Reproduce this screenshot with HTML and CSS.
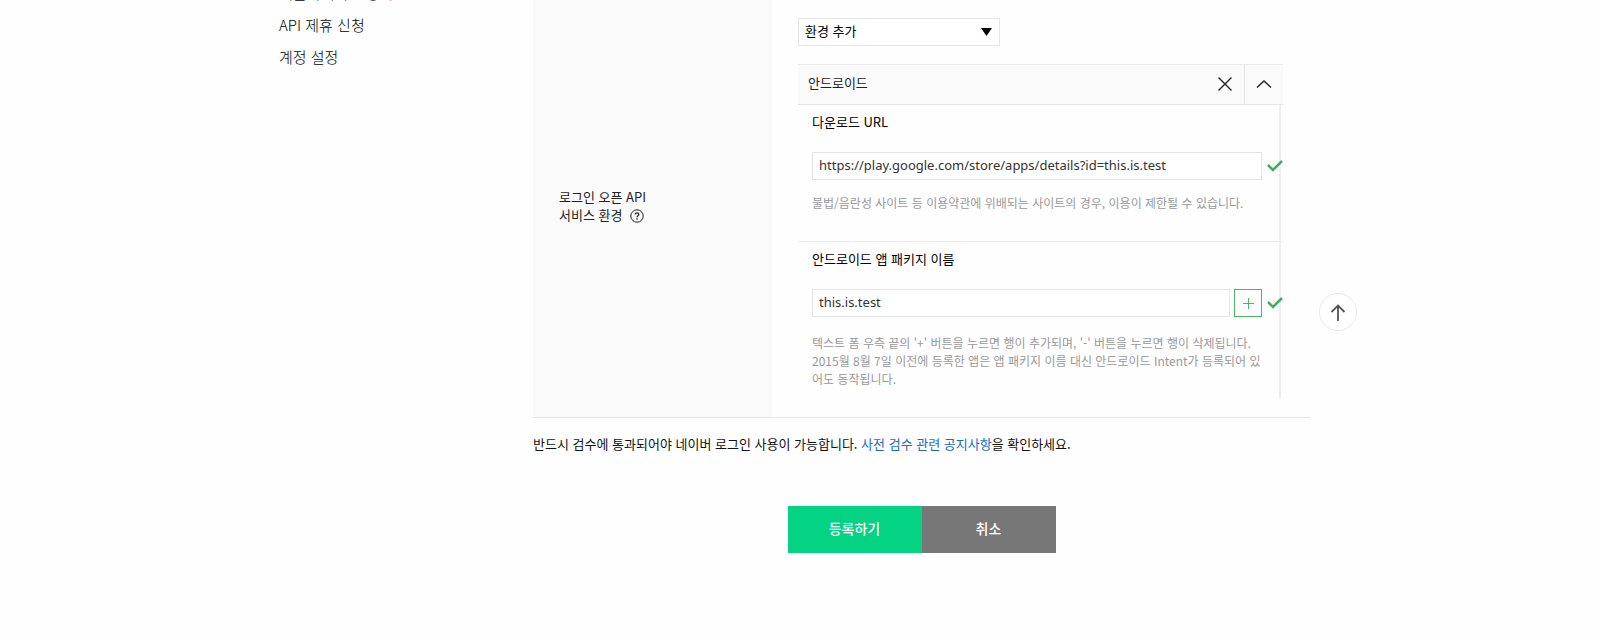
FILE: index.html
```html
<!DOCTYPE html>
<html lang="ko">
<head>
  <meta charset="UTF-8">
  <title>애플리케이션 등록</title>
  <link rel="stylesheet" href="styles.css">
</head>
<body>

<div class="container">
  <!-- 왼쪽 메뉴 -->
  <nav class="side-menu">
    <ul>
      <li><a href="#">애플리케이션 등록</a></li>
      <li><a href="#">API 제휴 신청</a></li>
      <li><a href="#">계정 설정</a></li>
    </ul>
  </nav>

  <main class="content">
    <form>
      <div class="form-row">
        <div class="form-title">
          <p>로그인 오픈 API<br>서비스 환경
            <button type="button" class="help" aria-label="도움말">
              <svg width="14" height="14" viewBox="0 0 14 14" fill="none" stroke="#222">
                <circle cx="7" cy="7" r="6.2"/>
                <path d="M5.2 5.6c0-2.4 3.6-2.3 3.6 0C8.8 6.8 7 6.9 7 8.3M7 9.3v1.4" stroke-width="1.3"/>
              </svg>
            </button>
          </p>
        </div>

        <div class="form-body">
          <div class="select-box">
            <select aria-label="환경 추가">
              <option>환경 추가</option>
            </select>
            <svg class="arrow" width="11" height="8" viewBox="0 0 11 8"><path d="M0 0h11L5.5 8z"/></svg>
          </div>

          <!-- 안드로이드 환경 -->
          <section class="panel">
            <header class="panel-head">
              <h3>안드로이드</h3>
              <button type="button" class="close" aria-label="삭제">
                <svg width="14" height="14" viewBox="0 0 14 14"><path d="M.5.5l13 13M13.5.5l-13 13"/></svg>
              </button>
              <button type="button" class="fold" aria-label="접기">
                <svg width="16" height="10" viewBox="0 0 16 10"><path d="M1 8.5l7-6.5 7 6.5"/></svg>
              </button>
            </header>

            <div class="panel-body">
              <div class="field">
                <label for="downloadUrl">다운로드 URL</label>
                <div class="input-row">
                  <input type="text" id="downloadUrl" value="https://play.google.com/store/apps/details?id=this.is.test">
                  <svg class="check" width="16" height="12" viewBox="0 0 16 12"><path d="M1 5l5 5 9-9"/></svg>
                </div>
                <p class="hint">불법/음란성 사이트 등 이용약관에 위배되는 사이트의 경우, 이용이 제한될 수 있습니다.</p>
              </div>

              <div class="field">
                <label for="packageName">안드로이드 앱 패키지 이름</label>
                <div class="input-row">
                  <input type="text" id="packageName" value="this.is.test">
                  <button type="button" class="add" aria-label="추가">
                    <svg width="11" height="11" viewBox="0 0 11 11"><path d="M5.5 0v11M0 5.5h11"/></svg>
                  </button>
                  <svg class="check" width="16" height="12" viewBox="0 0 16 12"><path d="M1 5l5 5 9-9"/></svg>
                </div>
                <p class="hint">텍스트 폼 우측 끝의 '+' 버튼을 누르면 행이 추가되며, '-' 버튼을 누르면 행이 삭제됩니다.<br>2015월 8월 7일 이전에 등록한 앱은 앱 패키지 이름 대신 안드로이드 Intent가 등록되어 있어도 동작됩니다.</p>
              </div>
            </div>
          </section>
        </div>
      </div>

      <p class="notice">반드시 검수에 통과되어야 네이버 로그인 사용이 가능합니다. <a href="#">사전 검수 관련 공지사항</a>을 확인하세요.</p>

      <div class="buttons">
        <button type="submit" class="submit">등록하기</button>
        <button type="button" class="cancel">취소</button>
      </div>
    </form>
  </main>
</div>

<!-- 맨 위로 -->
<a href="#" class="to-top" aria-label="맨 위로">
  <svg width="16" height="17" viewBox="0 0 16 17"><path d="M8 17V2M1.5 8L8 1.5 14.5 8"/></svg>
</a>

</body>
</html>
```
FILE: styles.css
```css
* {
  margin: 0;
  padding: 0;
  box-sizing: border-box;
}

body {
  font-family: "Noto Sans CJK KR", sans-serif;
  font-size: 13px;
  line-height: 18px;
  color: #222;
  background: #fefefe;
  overflow-x: hidden;
}

button {
  font-family: inherit;
  border: none;
  background: none;
  cursor: pointer;
}

svg {
  display: block;
}

.container {
  display: flex;
  max-width: 1042px;
  margin: 0 auto;
  padding-right: 11px;
}

/* 왼쪽 메뉴 */
.side-menu {
  width: 254px;
  flex-shrink: 0;
  margin-top: -23px;
}

.side-menu ul {
  list-style: none;
}

.side-menu a {
  display: block;
  font-size: 15px;
  font-weight: 300;
  line-height: 32px;
  color: #000;
  text-decoration: none;
}

.content {
  flex: 1;
}

/* 등록 폼 */
.form-row {
  display: flex;
  border-bottom: 1px solid #e5e5e5;
}

.form-title {
  width: 239px;
  padding: 0 26px 6px;
  background: #fafafa;
  display: flex;
  align-items: center;
}

.help {
  display: inline-block;
  vertical-align: middle;
  margin-left: 4px;
}

.form-body {
  flex: 1;
  padding: 18px 27px 18px 26px;
}

.select-box {
  position: relative;
  width: 202px;
  height: 28px;
  margin-bottom: 18px;
}

.select-box select {
  appearance: none;
  width: 100%;
  height: 100%;
  padding: 0 6px 3px;
  border: 1px solid #e5e5e5;
  background: #fff;
  font-family: inherit;
  font-size: 13px;
  color: #000;
}

.select-box .arrow {
  position: absolute;
  right: 8px;
  top: 10px;
}

.panel-head {
  display: flex;
  height: 41px;
  border-top: 1px solid #ececec;
  border-bottom: 1px solid #e5e5e5;
  background: #fafafa;
}

.panel-head h3 {
  flex: 1;
  padding-left: 10px;
  font-size: 13px;
  font-weight: 400;
  line-height: 36px;
}

.panel-head button {
  display: flex;
  align-items: center;
  justify-content: center;
  width: 39px;
  padding-bottom: 2px;
}

.panel-head .fold {
  border-left: 1px solid #e5e5e5;
}

.panel-head path {
  fill: none;
  stroke: #222;
  stroke-width: 1.4;
}

.panel-body {
  background: linear-gradient(#efefef, #efefef) right 2px top / 2px 100% no-repeat;
}

.field {
  height: 136px;
  padding: 8px 0 0 14px;
}

.field + .field {
  height: 158px;
  border-top: 1px solid #ececec;
}

.field label {
  display: block;
  margin-bottom: 21px;
  color: #000;
}

.input-row {
  display: flex;
  align-items: center;
}

.input-row input {
  flex: 1;
  min-width: 0;
  height: 28px;
  padding: 0 6px 2px;
  border: 1px solid #e5e5e5;
  background: #fff;
  font-family: "Noto Sans", "Noto Sans CJK KR", sans-serif;
  font-size: 13px;
  color: #333;
}

.check {
  margin-left: 5px;
  fill: none;
  stroke: #3cb05f;
  stroke-width: 2.5;
}

.add {
  display: flex;
  align-items: center;
  justify-content: center;
  width: 28px;
  height: 28px;
  margin-left: 4px;
  border: 1px solid #4db56a;
}

.add path {
  stroke: #4db56a;
}

.hint {
  margin-top: 14px;
  font-size: 12px;
  color: #999;
  word-break: break-all;
}

.field + .field .hint {
  margin-top: 17px;
  padding-right: 18px;
}

.notice {
  margin-top: 17px;
  color: #111;
}

.notice a {
  color: #1a6ac8;
  text-decoration: none;
}

.buttons {
  display: flex;
  justify-content: center;
  margin-top: 53px;
}

.buttons button {
  width: 134px;
  height: 47px;
  padding-bottom: 3px;
  font-size: 14px;
  font-weight: 500;
  color: #fff;
}

.submit {
  background: #03d383;
}

.cancel {
  background: #777;
}

/* 맨 위로 버튼 */
.to-top {
  position: fixed;
  right: 243px;
  bottom: 303px;
  display: flex;
  align-items: center;
  justify-content: center;
  width: 38px;
  height: 38px;
  border: 1px solid #e8e8e8;
  border-radius: 50%;
  background: #fff;
}

.to-top path {
  fill: none;
  stroke: #555;
  stroke-width: 1.8;
}
```
